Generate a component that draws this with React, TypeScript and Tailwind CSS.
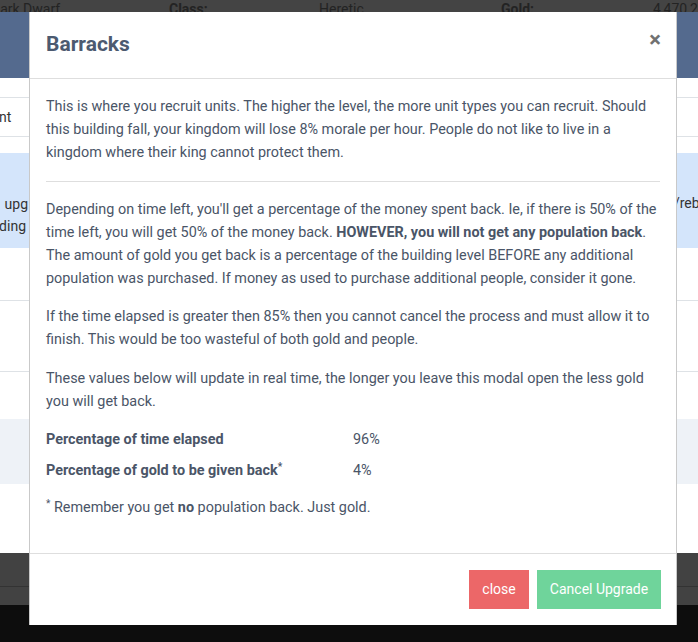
import React from "react";

export default function App() {
  const font = { fontFamily: "Roboto, 'Liberation Sans', sans-serif" };
  return (
    <div className="relative w-[698px] h-[642px] overflow-hidden bg-white" style={font}>
      {/* Background page */}
      <div className="flex flex-col h-full">
        <div className="h-[12px] overflow-hidden bg-[#444444] text-[#232323] text-[14px]">
          <div className="grid grid-cols-[169px_150px_182px_152px_100px] leading-[20px] -mt-[1px] -ml-[9px]">
            <span>Dark Dwarf</span>
            <span className="font-bold pl-[9px]">Class:</span>
            <span className="pl-[9px]">Heretic</span>
            <span className="font-bold pl-[9px]">Gold:</span>
            <span className="pl-[9px] whitespace-nowrap">4,470,221</span>
          </div>
        </div>
        <div className="h-[66px] bg-[#546a8e]" />
        <div className="h-[19px]" />
        <div className="h-[40px] border-t border-b border-[#dee2e6] flex items-center text-[14px] text-[#333]">
          <span className="-ml-[38px]">Amount</span>
        </div>
        <div className="h-[16px]" />
        <div className="h-[95px] bg-[#d4e5fb] flex items-center justify-between text-[14px] text-[#333]">
          <div className="w-[28px] flex flex-col items-end leading-[22px] pt-[28px] whitespace-nowrap">
            <span>upg</span>
            <span className="pr-[2px]">of building</span>
          </div>
          <span className="-mr-[24px] mt-[6px] whitespace-nowrap">/rebuild</span>
        </div>
        <div className="h-[52px]" />
        <div className="h-[72px] border-t border-b border-[#dee2e6]" />
        <div className="h-[47px]" />
        <div className="h-[65px] bg-[#eef2f7]" />
        <div className="h-[69px]" />
        <div className="h-[52px] bg-[#424242] flex flex-col">
          <div className="h-[34px] border-b border-[#333]" />
        </div>
        <div className="flex-1 bg-[#0d0d0d]" />
      </div>

      {/* Modal */}
      <div className="absolute left-[29px] top-[12px] w-[648px] h-[613px] bg-white border-x border-[#c9c9c9] flex flex-col text-[#4a5567]">
        <div className="h-[67px] border-b border-[#dedede] flex items-center justify-between pl-[16px] pr-[15px]">
          <h2 className="text-[21px] font-bold text-[#4c5a70] leading-none -mt-[1px]">Barracks</h2>
          <span className="text-[22px] font-bold text-[#717171] leading-none -mt-[10px]">×</span>
        </div>
        <div className="flex-1 px-[16px] pt-[16px] text-[14.4px] leading-[23px]">
          <p>
            This is where you recruit units. The higher the level, the more unit types you can recruit. Should
            this building fall, your kingdom will lose 8% morale per hour. People do not like to live in a
            kingdom where their king cannot protect them.
          </p>
          <hr className="mt-[17px] mb-[16px] border-t border-[#dedede]" />
          <p className="mb-[15px]">
            Depending on time left, you'll get a percentage of the money spent back. Ie, if there is 50% of the
            time left, you will get 50% of the money back.{" "}
            <strong className="font-bold">HOWEVER, you will not get any population back</strong>. The amount of
            gold you get back is a percentage of the building level BEFORE any additional population was
            purchased. If money as used to purchase additional people, consider it gone.
          </p>
          <p className="mb-4">
            If the time elapsed is greater then 85% then you cannot cancel the process and must allow it to
            finish. This would be too wasteful of both gold and people.
          </p>
          <p className="mb-[11px]">
            These values below will update in real time, the longer you leave this modal open the less gold
            you will get back.
          </p>
          <div className="flex flex-col">
            <div className="flex py-[4px]">
              <span className="w-[307px] font-bold">Percentage of time elapsed</span>
              <span>96%</span>
            </div>
            <div className="flex py-[4px]">
              <span className="w-[307px] font-bold">
                Percentage of gold to be given back<sup className="text-[10px]">*</sup>
              </span>
              <span>4%</span>
            </div>
          </div>
          <p className="mt-[10px]">
            <sup className="text-[10px]">*</sup> Remember you get <strong className="font-bold">no</strong>{" "}
            population back. Just gold.
          </p>
        </div>
        <div className="h-[72px] border-t border-[#dedede] flex items-start justify-end gap-[8px] pt-[16px] pr-[15px]">
          <button className="h-[39px] w-[60px] bg-[#ec6768] text-white text-[14px] flex items-center justify-center">
            close
          </button>
          <button className="h-[39px] w-[124px] bg-[#6fd49b] text-white text-[14px] flex items-center justify-center">
            Cancel Upgrade
          </button>
        </div>
      </div>
    </div>
  );
}
